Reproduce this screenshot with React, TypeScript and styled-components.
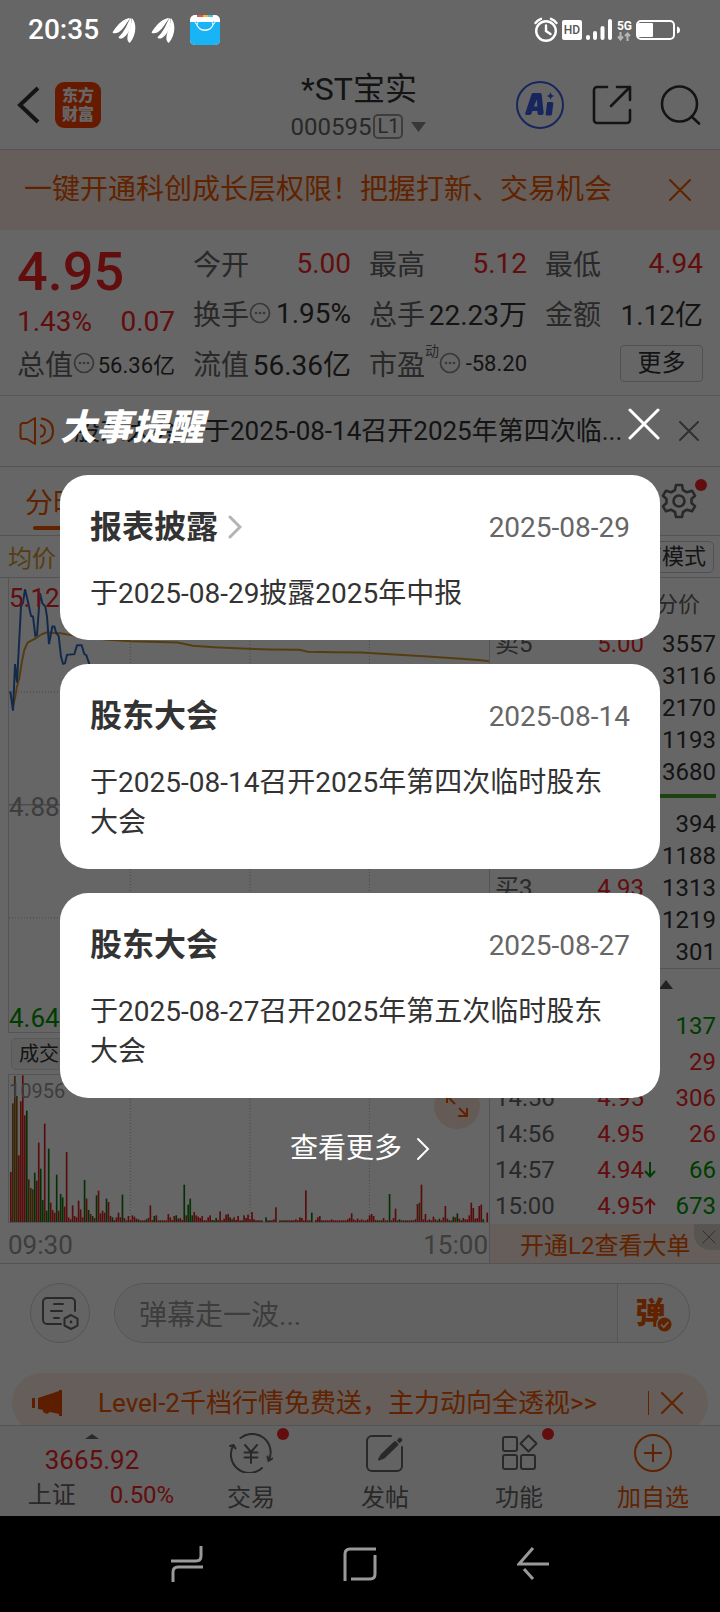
import React from 'react';
import styled, { createGlobalStyle, css } from 'styled-components';

const color = {
  ink: '#333333',
  body: '#666666',
  muted: '#999999',
  line: '#d2d2d6',
  red: '#f52525',
  green: '#009a00',
  orange: '#f25600',
  tint: '#fcece1',
  gold: '#d69a2c',
  blue: '#2f6dbd',
};

const Global = createGlobalStyle`
  * { box-sizing: border-box; }
  body {
    margin: 0;
    background: #000;
    font-family: Roboto, "Noto Sans CJK SC", sans-serif;
    color: ${color.ink};
  }
  button, input {
    font-family: inherit;
    color: inherit;
    background: none;
    border: 0;
    padding: 0;
    margin: 0;
  }
  button { cursor: pointer; }
  a { color: inherit; text-decoration: none; }
  svg { display: block; flex: none; }
`;

/* ---------- shell ---------- */
const Screen = styled.div`
  position: relative;
  background: #fff;
`;

const StatusBar = styled.header`
  position: relative;
  z-index: 2;
  height: 60px;
  padding: 0 40px 0 28px;
  display: flex;
  align-items: center;
  color: #fff;
`;
const Clock = styled.span`
  font-size: 28px;
  font-weight: 500;
  line-height: 62px;
  margin-right: 13px;
`;
const StatusApps = styled.div`
  display: flex;
  align-items: center;
  gap: 15px;
  flex: 1;
`;
const StatusIcons = styled.div`
  display: flex;
  align-items: center;
  gap: 4px;
`;
const HdBadge = styled.span`
  width: 20px;
  height: 20px;
  border-radius: 2px;
  background: #fff;
  color: #555;
  font-size: 12px;
  font-weight: 500;
  line-height: 20px;
  text-align: center;
`;
const Network = styled.span`
  display: flex;
  flex-direction: column;
  align-items: center;
  font-size: 12px;
  font-weight: 700;
  line-height: 12px;
`;

/* ---------- title bar ---------- */
const TitleBar = styled.div`
  height: 90px;
  padding: 0 18px 0 16px;
  display: grid;
  grid-template-columns: 1fr auto 1fr;
  align-items: center;
  border-bottom: 1px solid ${color.line};
`;
const BarSide = styled.div<{ $end?: boolean }>`
  display: flex;
  align-items: center;
  gap: ${p => (p.$end ? 28 : 14)}px;
  justify-content: ${p => (p.$end ? 'flex-end' : 'flex-start')};
`;
const IconButton = styled.button`
  display: flex;
  align-items: center;
  justify-content: center;
`;
const BrandLogo = styled.a`
  width: 46px;
  height: 46px;
  border-radius: 9px;
  background: #ff4400;
  color: #fff;
  font-size: 16px;
  font-weight: 900;
  line-height: 19px;
  padding: 4px 0;
  text-align: center;
`;
const StockName = styled.h1`
  margin: 0;
  font-size: 32px;
  font-weight: 400;
  line-height: 44px;
  text-align: center;
`;
const StockCode = styled.div`
  display: flex;
  align-items: center;
  gap: 2px;
  font-size: 24px;
  line-height: 32px;
  color: ${color.body};
`;
const LevelTag = styled.span`
  border: 2px solid ${color.muted};
  border-radius: 5px;
  height: 25px;
  padding: 0 2px;
  font-size: 20px;
  line-height: 21px;
  color: ${color.body};
`;

/* ---------- promo, quotes, notice ---------- */
const Promo = styled.div`
  height: 80px;
  padding: 0 28px 0 24px;
  display: flex;
  align-items: center;
  justify-content: space-between;
  background: ${color.tint};
  color: ${color.orange};
  font-size: 28px;
  line-height: 40px;
`;
const Quotes = styled.section`
  padding: 8px 17px 7px;
  display: grid;
  grid-template-columns: repeat(4, minmax(0, 1fr));
  column-gap: 18px;
  border-bottom: 1px solid #dedede;
`;
const QuoteColumn = styled.div`
  display: flex;
  flex-direction: column;
`;
const LastPrice = styled.strong`
  height: 66px;
  font-size: 54px;
  font-weight: 500;
  line-height: 68px;
  color: ${color.red};
`;
const QuoteRow = styled.div<{ $short?: boolean }>`
  height: ${p => (p.$short ? 34 : 50)}px;
  display: flex;
  align-items: center;
  white-space: nowrap;
`;
const QuoteLabel = styled.span`
  font-size: 28px;
  color: ${color.body};
`;
const QuoteValue = styled.span<{ $up?: boolean; $small?: boolean }>`
  font-size: ${p => (p.$small ? 22 : 28)}px;
  color: ${p => (p.$up ? color.red : color.ink)};
  &:last-child { margin-left: auto; }
`;
const Superscript = styled.sup`
  font-size: 14px;
  line-height: 14px;
  color: ${color.body};
  align-self: flex-start;
  margin-top: 6px;
`;
const MoreButton = styled.button`
  margin-left: auto;
  width: 83px;
  height: 37px;
  border: 1px solid #c9c9c9;
  border-radius: 4px;
  font-size: 24px;
  line-height: 32px;
`;
const Notice = styled.div`
  height: 71px;
  padding: 0 20px 0 19px;
  display: flex;
  align-items: center;
  border-bottom: 1px solid ${color.line};
`;
const NoticeText = styled.a`
  flex: 1;
  min-width: 0;
  margin-left: 19px;
  font-size: 26px;
  line-height: 36px;
  white-space: nowrap;
  overflow: hidden;
`;

/* ---------- chart tabs ---------- */
const Tabs = styled.nav`
  height: 69px;
  padding: 0 23px 0 25px;
  display: flex;
  align-items: center;
  justify-content: space-between;
  border-bottom: 1px solid ${color.line};
  font-size: 28px;
  color: ${color.body};
`;
const Tab = styled.a<{ $active?: boolean }>`
  height: 68px;
  line-height: 74px;
  position: relative;
  ${p =>
    p.$active &&
    css`
      color: ${color.orange};
      &::after {
        content: '';
        position: absolute;
        left: 8px;
        right: 8px;
        bottom: 5px;
        height: 4px;
        border-radius: 2px;
        background: ${color.orange};
      }
    `}
`;
const Dotted = styled.span`
  position: relative;
  display: block;
`;
const Dot = styled.i<{ $far?: boolean }>`
  position: absolute;
  top: ${p => (p.$far ? -5 : -4)}px;
  right: ${p => (p.$far ? -16 : -10)}px;
  width: 12px;
  height: 12px;
  border-radius: 50%;
  background: ${color.red};
`;
const Legend = styled.div`
  height: 42px;
  padding: 0 6px 0 8px;
  display: flex;
  align-items: center;
  justify-content: space-between;
  border-bottom: 1px solid ${color.line};
  font-size: 24px;
  color: ${color.gold};
`;
const ModeButton = styled.button`
  height: 32px;
  padding: 0 7px;
  border: 1px solid #c4c8d4;
  border-radius: 5px;
  font-size: 22px;
  line-height: 30px;
  color: ${color.ink};
`;

/* ---------- charts ---------- */
const Market = styled.section`
  display: grid;
  grid-template-columns: minmax(0, 489fr) minmax(0, 231fr);
  border-bottom: 1px solid ${color.line};
`;
const Charts = styled.div`
  padding-left: 8px;
`;
const Plot = styled.div<{ $h: number }>`
  position: relative;
  height: ${p => p.$h}px;
  border-left: 1px solid ${color.line};
  border-bottom: 1px solid ${color.line};
  svg { width: 100%; height: 100%; }
`;
const AxisLabel = styled.span<{ $at: 'top' | 'middle' | 'bottom'; $c: string; $small?: boolean }>`
  position: absolute;
  left: 0;
  font-size: ${p => (p.$small ? 20 : 26)}px;
  line-height: 32px;
  color: ${p => p.$c};
  ${p => p.$at === 'top' && (p.$small ? 'top: 0;' : 'top: 4px;')}
  ${p => p.$at === 'middle' && 'top: 50%; margin-top: -14px;'}
  ${p => p.$at === 'bottom' && 'bottom: -2px;'}
`;
const IndicatorRow = styled.div`
  height: 42px;
  padding: 5px 3px;
  border-bottom: 1px solid ${color.line};
`;
const IndicatorButton = styled.button`
  height: 32px;
  padding: 0 7px;
  border: 1px solid #dcdcdc;
  border-radius: 5px;
  background: #f4f4f4;
  font-size: 20px;
  line-height: 28px;
`;
const ExpandButton = styled.button`
  position: absolute;
  right: 9px;
  top: 8px;
  width: 46px;
  height: 46px;
  border-radius: 50%;
  background: #fbe3d7;
  svg { width: 24px; height: 24px; margin: 0 auto; }
`;
const TimeAxis = styled.div`
  height: 40px;
  padding-right: 1px;
  display: flex;
  justify-content: space-between;
  font-size: 26px;
  line-height: 44px;
  color: ${color.muted};
`;

/* ---------- order book ---------- */
const Book = styled.div`
  border-left: 1px solid ${color.line};
`;
const BookTabs = styled.div`
  height: 50px;
  padding-right: 20px;
  text-align: right;
  font-size: 22px;
  line-height: 54px;
  color: ${color.body};
`;
const Grid = styled.table`
  width: 100%;
  table-layout: fixed;
  border-collapse: collapse;
  font-size: 24px;
  line-height: 28px;
`;
const Row = styled.tr<{ $h: number }>`
  height: ${p => p.$h}px;
`;
const Cell = styled.td<{ $w?: number; $c?: string; $first?: boolean; $last?: boolean }>`
  width: ${p => (p.$w ? `${p.$w}px` : 'auto')};
  padding: 0 ${p => (p.$last ? 4 : 0)}px 0 ${p => (p.$first ? 5 : 0)}px;
  text-align: ${p => (p.$first ? 'left' : 'right')};
  color: ${p => p.$c || color.ink};
`;
const Balance = styled.div`
  height: 4px;
  margin: 6px 4px 10px 6px;
  background: linear-gradient(90deg, ${color.red} 30%, #49a62f 30%);
`;
const Collapse = styled.button`
  width: 100%;
  height: 40px;
  padding: 0 47px 8px 0;
  border-top: 1px solid ${color.line};
  display: flex;
  align-items: center;
  justify-content: flex-end;
`;
const L2Promo = styled.div`
  position: relative;
  height: 39px;
  padding-left: 30px;
  background: ${color.tint};
  color: ${color.orange};
  font-size: 24px;
  line-height: 44px;
`;
const L2Close = styled.button`
  position: absolute;
  top: 0;
  right: 0;
  width: 26px;
  height: 26px;
  padding-left: 7px;
  border-bottom-left-radius: 16px;
  background: #d9d2cc;
`;

/* ---------- comment bar and strip ---------- */
const CommentBar = styled.form`
  padding: 19px 30px 30px;
  display: flex;
  gap: 24px;
`;
const RoundButton = styled.button`
  width: 60px;
  height: 60px;
  border: 1px solid ${color.line};
  border-radius: 50%;
  background: #fafafa;
  display: flex;
  align-items: center;
  justify-content: center;
`;
const CommentBox = styled.div`
  flex: 1;
  height: 60px;
  display: flex;
  border: 1px solid ${color.line};
  border-radius: 30px;
  overflow: hidden;
  background: #fafafa;
`;
const CommentInput = styled.input`
  flex: 1;
  min-width: 0;
  padding: 4px 24px 0;
  font-size: 28px;
  background: #f5f5f5;
  outline: none;
  &::placeholder { color: ${color.muted}; opacity: 1; }
`;
const BarrageButton = styled.button`
  position: relative;
  width: 72px;
  padding-right: 6px;
  border-left: 1px solid ${color.line};
  font-size: 30px;
  font-weight: 900;
  line-height: 54px;
  color: ${color.orange};
  svg { position: absolute; left: 38px; top: 32px; }
`;
const StripClip = styled.div`
  height: 52px;
  padding: 0 12px;
  overflow: hidden;
`;
const Strip = styled.div`
  height: 60px;
  padding: 0 24px 0 20px;
  border-radius: 30px;
  background: ${color.tint};
  color: ${color.orange};
  display: flex;
  align-items: center;
  font-size: 26px;
  line-height: 36px;
`;
const StripText = styled.a`
  flex: 1;
  margin-left: 36px;
`;
const StripRule = styled.span`
  width: 1px;
  height: 24px;
  margin-right: 11px;
  background: ${color.orange};
`;

/* ---------- bottom bars ---------- */
const TabBar = styled.nav`
  height: 91px;
  display: grid;
  grid-template-columns: 184fr 134fr 134fr 134fr 134fr;
  border-top: 1px solid ${color.line};
  background: #f8f8f8;
`;
const IndexCell = styled.a`
  display: flex;
  flex-direction: column;
  align-items: center;
  padding-top: 8px;
  color: ${color.red};
  font-size: 26px;
  line-height: 42px;
`;
const IndexRow = styled.span`
  display: flex;
  gap: 34px;
  padding-left: 18px;
  font-size: 24px;
  line-height: 28px;
`;
const IndexName = styled.span`
  color: ${color.body};
`;
const TabItem = styled.a<{ $accent?: boolean }>`
  display: flex;
  flex-direction: column;
  align-items: center;
  padding-top: 7px;
  font-size: 24px;
  line-height: 50px;
  color: ${p => (p.$accent ? color.orange : color.body)};
`;
const SystemNav = styled.nav`
  height: 96px;
  background: #000;
  display: flex;
  align-items: center;
  justify-content: center;
  gap: 140px;
`;

/* ---------- reminder dialog ---------- */
const Backdrop = styled.div`
  position: absolute;
  inset: 0;
  z-index: 1;
  background: rgba(0, 0, 0, 0.6);
  padding: 397px 60px 0;
`;
const Dialog = styled.section`
  display: flex;
  flex-direction: column;
  gap: 24px;
`;
const DialogHead = styled.header`
  height: 54px;
  display: flex;
  align-items: center;
  justify-content: space-between;
  color: #fff;
`;
const DialogTitle = styled.h2`
  margin: 0;
  font-family: "Noto Sans CJK SC", sans-serif;
  font-size: 36px;
  font-weight: 900;
  font-style: italic;
  line-height: 52px;
`;
const Card = styled.article`
  padding: 30px 30px 26px;
  border-radius: 28px;
  background: #fff;
`;
const CardHead = styled.header`
  height: 44px;
  display: flex;
  align-items: center;
  gap: 10px;
`;
const CardTitle = styled.h3`
  margin: 0;
  font-size: 32px;
  font-weight: 700;
  line-height: 46px;
`;
const CardDate = styled.time`
  margin-left: auto;
  font-size: 28px;
  color: ${color.body};
`;
const CardText = styled.p`
  margin: 25px 0 0;
  padding-right: 8px;
  font-size: 28px;
  line-height: 40px;
`;
const SeeMore = styled.button`
  align-self: center;
  display: flex;
  align-items: center;
  gap: 14px;
  padding-top: 6px;
  font-size: 28px;
  line-height: 42px;
  color: #fff;
`;

/* ---------- icons ---------- */
const Cross = ({ size, w = 2, c = 'currentColor' }: { size: number; w?: number; c?: string }) => (
  <svg width={size} height={size} viewBox={`0 0 ${size} ${size}`} stroke={c} strokeWidth={w} strokeLinecap="round">
    <path d={`M2 2L${size - 2} ${size - 2}M${size - 2} 2L2 ${size - 2}`} />
  </svg>
);
const Chevron = ({ c, w = 2 }: { c: string; w?: number }) => (
  <svg width="14" height="24" viewBox="0 0 14 24" fill="none" stroke={c} strokeWidth={w} strokeLinecap="round">
    <path d="M2 2l10 10L2 22" />
  </svg>
);
const Wing = () => (
  <svg width="24" height="27" viewBox="338 50 70 80" fill="#fff">
    <path d="M339 95C350 80 364 58 388 53L391 55C382 62 374 86 356 96C350 99 341 100 339 95Z" />
    <path d="M357 109C374 96 382 72 392 54L396 55C394 76 390 100 370 112C364 115 357 114 357 109Z" />
    <path d="M390 127C372 116 394 84 397 54C413 72 408 106 390 127Z" />
  </svg>
);
const Bag = () => (
  <svg width="30" height="30" viewBox="0 0 30 30">
    <rect width="30" height="30" rx="5" fill="#fff" />
    <path d="M0 7h30v18a5 5 0 0 1-5 5H5a5 5 0 0 1-5-5z" fill="#18b4f6" />
    <path d="M7 0h6v2H7z" fill="#e0524c" />
    <path d="M13 0h5v2h-5z" fill="#f2b63c" />
    <path d="M18 0h5v2h-5z" fill="#4fc3d6" />
    <path d="M6.500 8C8 17.500 22 17.500 23.500 8" fill="none" stroke="#fff" strokeWidth="1.500" />
    <circle cx="6.500" cy="7.500" r="1.300" fill="#18b4f6" stroke="#fff" />
    <circle cx="23.500" cy="7.500" r="1.300" fill="#18b4f6" stroke="#fff" />
  </svg>
);
const Alarm = () => (
  <svg width="24" height="26" viewBox="0 0 24 26" fill="none" stroke="#fff" strokeWidth="2.400" strokeLinecap="round">
    <circle cx="12" cy="14" r="9.800" />
    <path d="M12 8.500V14l4.500 3M1.500 6A12 12 0 0 1 7 1.800M17 1.800A12 12 0 0 1 22.500 6" />
  </svg>
);
const Signal = () => (
  <svg width="27" height="22" viewBox="0 0 27 22" fill="#fff">
    <rect x="0" y="16" width="4" height="5" rx="2" />
    <rect x="7" y="12" width="4" height="9" rx="2" />
    <rect x="14.500" y="7" width="4" height="14" rx="2" />
    <rect x="22" y="0" width="4" height="21" rx="2" />
  </svg>
);
const DataArrows = () => (
  <svg width="14" height="9" viewBox="0 0 14 9" fill="none" stroke="#b5b5b5" strokeWidth="2">
    <path d="M3.500 0v7M1 4.500L3.500 7.500 6 4.500M10.500 9V1.500M8 4l2.500-2.500L13 4" />
  </svg>
);
const Battery = () => (
  <svg width="44" height="20" viewBox="0 0 44 20">
    <rect x="1" y="1" width="37" height="18" rx="4" fill="none" stroke="#fff" strokeWidth="2" />
    <rect x="2" y="3" width="15" height="14" rx="1" fill="#fff" />
    <path d="M41 6.500q3 .500 3 3.500t-3 3.500z" fill="#fff" />
  </svg>
);
const Back = () => (
  <svg width="25" height="38" viewBox="0 0 25 38" fill="none" stroke="#333" strokeWidth="4">
    <path d="M22 2L4 19l18 17" />
  </svg>
);
const AiMark = () => (
  <svg width="48" height="48" viewBox="0 0 48 48">
    <circle cx="24" cy="24" r="23" fill="none" stroke="#3a62ec" strokeWidth="2" />
    <path fill="#3a62ec" fillRule="evenodd" d="M17 12h7q1.500 0 1.700 1.500l2 18.500q0 2-2 2h-2.500q-1.700 0-1.700-2v-2h-5l-1 2.500q-.700 1.500-2 1.500h-3q-2-.200-1.200-2l6-18Q15.500 12 17 12zM17.800 25.500h3.500L21 18.500z" />
    <path fill="#3a62ec" d="M32 21h4q1.500 0 1.300 1.500l-1.300 10.500q-.300 1.500-1.500 1.500H31q-1.500 0-1.300-1.500L31 22q.100-1 1-1zM34.500 11q.600 3.400 4 4-3.400.600-4 4-.600-3.400-4-4 3.400-.600 4-4z" />
  </svg>
);
const Share = () => (
  <svg width="40" height="40" viewBox="0 0 40 40" fill="none" stroke="#333" strokeWidth="2.600" strokeLinecap="round" strokeLinejoin="round">
    <path d="M15 2H5a3 3 0 0 0-3 3v30a3 3 0 0 0 3 3h30a3 3 0 0 0 3-3V25" />
    <path d="M25 2h13v13M38 2L19 21" />
  </svg>
);
const Search = () => (
  <svg width="42" height="42" viewBox="0 0 42 42" fill="none" stroke="#333" strokeWidth="2.600" strokeLinecap="round">
    <circle cx="19.500" cy="20" r="17.500" />
    <path d="M31.500 32.500l7.500 7" />
  </svg>
);
const Info = () => (
  <svg width="22" height="22" viewBox="0 0 22 22" fill="none" stroke="#8c8c8c" strokeWidth="1.700">
    <circle cx="11" cy="11" r="9.500" />
    <path d="M7 11h.100M11 11h.100M15 11h.100" strokeWidth="2.600" strokeLinecap="round" />
  </svg>
);
const Speaker = () => (
  <svg width="36" height="30" viewBox="0 0 36 30" fill="none" stroke={color.orange} strokeWidth="2">
    <path d="M16 2v26l-8-5H4a2.500 2.500 0 0 1-2.500-2.500v-11A2.500 2.500 0 0 1 4 7h4z" strokeLinejoin="round" />
    <path d="M21 9q5 1.500 5 6t-5 6M22 2.500q12 1.500 12 12.500t-12 12.500" />
  </svg>
);
const Gear = () => (
  <svg width="36" height="36" viewBox="0 0 36 36" fill="none" stroke="#666" strokeWidth="2.600" strokeLinejoin="round">
    <path d="M15 2h6l1 5 4 2.300 5-1.600 3 5L30.500 16v4l3.500 3.300-3 5-5-1.600-4 2.300-1 5h-6l-1-5-4-2.300-5 1.600-3-5L5.500 20v-4L2 12.700l3-5 5 1.600L14 7z" />
    <circle cx="18" cy="18" r="5.500" />
  </svg>
);
const Arrow = ({ up }: { up?: boolean }) => (
  <svg width="12" height="16" viewBox="0 0 12 16" fill="none" stroke={up ? color.red : color.green} strokeWidth="2">
    <path d={up ? 'M6 16V2M1 7l5-5.500L11 7' : 'M6 0v14M1 9l5 5.500L11 9'} />
  </svg>
);
const PanelIcon = () => (
  <svg width="38" height="34" viewBox="0 0 38 34" fill="none" stroke="#666" strokeWidth="2" strokeLinecap="round">
    <path d="M20 28H6a4 4 0 0 1-4-4V6a4 4 0 0 1 4-4h24a4 4 0 0 1 4 4v9" />
    <path d="M13 8h9M10 15h11M13 22h5" />
    <path d="M30 19l6.500 3.600v7L30 33l-6.500-3.500v-7z" strokeLinejoin="round" />
    <circle cx="30" cy="26" r="1.400" fill="#666" stroke="none" />
  </svg>
);
const CheckBadge = () => (
  <svg width="17" height="17" viewBox="0 0 17 17">
    <circle cx="8.500" cy="8.500" r="8.500" fill="#fafafa" />
    <circle cx="8.500" cy="8.500" r="7" fill={color.orange} />
    <path d="M5 8.500l2.800 2.800L12.300 6" fill="none" stroke="#fafafa" strokeWidth="1.600" />
  </svg>
);
const Horn = () => (
  <svg width="30" height="28" viewBox="0 0 30 28" fill="#e84c00">
    <path d="M0 9h3v10H0zM6 9l21-7V1h3v26h-3v-2l-9-2-3 2-4-2v-2l-5-1z" />
  </svg>
);
const Trade = () => (
  <svg width="44" height="40" viewBox="0 0 44 40" fill="none" stroke="#666" strokeWidth="2" strokeLinecap="round">
    <path d="M11.500 5A18.500 18.500 0 0 1 39.500 28M39.500 28l4-2.500M39.500 28l-1-4.500" />
    <path d="M33 35A18.500 18.500 0 0 1 4.500 12M4.500 12l-3.500 1M4.500 12l2 3.500" />
    <path d="M16 12l6 7 6-7M22 19v11M15.500 19.500h13M15.500 24.500h13" />
  </svg>
);
const Post = () => (
  <svg width="40" height="40" viewBox="0 0 40 40" fill="none" stroke="#666" strokeWidth="2" strokeLinecap="round">
    <path d="M26 3H7a5 5 0 0 0-5 5v25a5 5 0 0 0 5 5h25a5 5 0 0 0 5-5V14" />
    <path d="M14 26.500l2.500-4.500L30 9l2.500 2.500L19 24.500zM33 7.500l2-2 1.500 1.500-2 2z" fill="#666" strokeLinejoin="round" />
  </svg>
);
const Functions = () => (
  <svg width="38" height="40" viewBox="0 0 38 40" fill="none" stroke="#666" strokeWidth="2" strokeLinejoin="round">
    <rect x="3" y="4" width="14" height="14" rx="2" />
    <rect x="3" y="22" width="14" height="14" rx="2" />
    <rect x="21" y="22" width="14" height="14" rx="2" />
    <path d="M28.500 2.500l8 8-8 8-8-8z" />
  </svg>
);
const Add = () => (
  <svg width="40" height="40" viewBox="0 0 40 40" fill="none" stroke={color.orange} strokeWidth="2">
    <circle cx="20" cy="20" r="18" />
    <path d="M20 11v18M11 20h18" />
  </svg>
);

/* ---------- data ---------- */
const asks = [['卖5', '5.00', '3557'], ['', '', '3116'], ['', '', '2170'], ['', '', '1193'], ['', '', '3680']];
const bids = [['', '', '394'], ['', '', '1188'], ['买3', '4.93', '1313'], ['', '', '1219'], ['', '', '301']];
const trades: [string, string, string, string, string][] = [
  ['', '', '', '137', 'g'],
  ['', '', '', '29', 'r'],
  ['14:56', '4.95', '', '306', 'r'],
  ['14:56', '4.95', '', '26', 'r'],
  ['14:57', '4.94', 'down', '66', 'g'],
  ['15:00', '4.95', 'up', '673', 'g'],
];
const events = [
  { title: '报表披露', date: '2025-08-29', text: '于2025-08-29披露2025年中报', link: true },
  { title: '股东大会', date: '2025-08-14', text: '于2025-08-14召开2025年第四次临时股东大会' },
  { title: '股东大会', date: '2025-08-27', text: '于2025-08-27召开2025年第五次临时股东大会' },
];

/* One entry per minute: height plus r (rise), g (fall) or m (mixed). */
const volume = (
  '150r 356m 438m 378m 200r 362r 440r 320r 334g 128m 102m 98m 148g 124r 238r 160g 66g 295r 34g 220g 58r 36r 28r 142g 34r 84g 74g 46r 210r 14r ' +
  '8r 50r 18r 14r 64r 38r 14r 126g 70r 36g 24r 18g 12r 80g 94r 26r 34r 28r 70g 60r 18r 14g 6r 14r 28r 14r 82g 12r 5r 18r ' +
  '6r 20r 16r 10r 8g 5r 5r 5r 8g 12r 50r 6r 18g 20r 5r 5g 5r 5r 5r 24r 14r 6r 18r 20g 10r 12r 6r 112g 20r 52g ' +
  '70g 20g 30r 20r 16r 12r 18r 5r 5r 14r 20r 6r 5g 12g 6r 32r 5r 10r 22r 24r 14g 8r 14r 6r 18r 5r 5g 20r 12r 22r ' +
  '8r 30r 8r 5r 5r 5r 5r 0r 14g 5r 5g 5r 8r 44r 0r 5g 5r 5r 5g 5r 5r 5g 5r 8r 5r 14r 12r 5r 95r 5r ' +
  '5r 28g 0r 6r 14r 18r 5g 5r 5r 5r 5r 8r 5r 5r 5r 5r 5r 5r 5r 8r 12r 26r 8r 5r 10r 5r 8r 5r 5r 8r ' +
  '20r 24r 18r 6r 5g 5r 5g 12r 5r 5r 84g 5r 12r 40r 5r 8g 5r 5g 5r 5r 5r 5g 5r 8r 54r 58m 112r 8r 24r 5r ' +
  '8r 5r 16r 8r 5r 10g 5r 14r 48r 10r 5g 5r 16g 14r 26g 10r 5g 12r 8r 8r 20r 58r 42r 10r 12r 48r 52r 8g 0r 28r'
)
  .split(' ')
  .map(v => ({ h: parseInt(v, 10), kind: v.slice(-1) }));
const barFill: Record<string, string> = { r: '#dc2020', g: '#0c7a0c', m: '#8a5a10' };

const GridLines = ({ y, h }: { y: number; h: number }) => (
  <>
    {[388, 747, 1105].map(x => (
      <path key={x} d={`M${x} ${y}v${h}`} stroke="#b4b4b4" strokeDasharray="1 2" vectorEffect="non-scaling-stroke" />
    ))}
  </>
);

const BookRows = ({ rows }: { rows: string[][] }) => (
  <Grid>
    <tbody>
      {rows.map(([label, price, qty]) => (
        <Row key={qty} $h={32}>
          <Cell $first $w={76} $c={color.body}>{label}</Cell>
          <Cell $c={color.red}>{price}</Cell>
          <Cell $last $w={76}>{qty}</Cell>
        </Row>
      ))}
    </tbody>
  </Grid>
);

export default function App() {
  return (
    <>
      <Global />
      <Screen>
        <StatusBar>
          <Clock>20:35</Clock>
          <StatusApps>
            <Wing />
            <Wing />
            <Bag />
          </StatusApps>
          <StatusIcons>
            <Alarm />
            <HdBadge>HD</HdBadge>
            <Signal />
            <Network>
              5G
              <DataArrows />
            </Network>
            <Battery />
          </StatusIcons>
        </StatusBar>

        <TitleBar>
          <BarSide>
            <IconButton aria-label="返回"><Back /></IconButton>
            <BrandLogo href="#home">东方<br />财富</BrandLogo>
          </BarSide>
          <div>
            <StockName>*ST宝实</StockName>
            <StockCode>
              000595
              <LevelTag>L1</LevelTag>
              <svg width="22" height="10" viewBox="0 0 22 10" fill="#8c8c8c"><path d="M6 0h15l-7.500 10z" /></svg>
            </StockCode>
          </div>
          <BarSide $end>
            <IconButton aria-label="AI"><AiMark /></IconButton>
            <IconButton aria-label="分享"><Share /></IconButton>
            <IconButton aria-label="搜索"><Search /></IconButton>
          </BarSide>
        </TitleBar>

        <Promo>
          <a href="#promo">一键开通科创成长层权限！把握打新、交易机会</a>
          <IconButton aria-label="关闭"><Cross size={24} /></IconButton>
        </Promo>

        <Quotes>
          <QuoteColumn>
            <LastPrice>4.95</LastPrice>
            <QuoteRow $short>
              <QuoteValue $up>1.43%</QuoteValue>
              <QuoteValue $up>0.07</QuoteValue>
            </QuoteRow>
            <QuoteRow>
              <QuoteLabel>总值</QuoteLabel><Info />
              <QuoteValue $small>56.36亿</QuoteValue>
            </QuoteRow>
          </QuoteColumn>
          <QuoteColumn>
            <QuoteRow><QuoteLabel>今开</QuoteLabel><QuoteValue $up>5.00</QuoteValue></QuoteRow>
            <QuoteRow><QuoteLabel>换手</QuoteLabel><Info /><QuoteValue>1.95%</QuoteValue></QuoteRow>
            <QuoteRow><QuoteLabel>流值</QuoteLabel><QuoteValue>56.36亿</QuoteValue></QuoteRow>
          </QuoteColumn>
          <QuoteColumn>
            <QuoteRow><QuoteLabel>最高</QuoteLabel><QuoteValue $up>5.12</QuoteValue></QuoteRow>
            <QuoteRow><QuoteLabel>总手</QuoteLabel><QuoteValue>22.23万</QuoteValue></QuoteRow>
            <QuoteRow>
              <QuoteLabel>市盈</QuoteLabel><Superscript>动</Superscript><Info />
              <QuoteValue $small>-58.20</QuoteValue>
            </QuoteRow>
          </QuoteColumn>
          <QuoteColumn>
            <QuoteRow><QuoteLabel>最低</QuoteLabel><QuoteValue $up>4.94</QuoteValue></QuoteRow>
            <QuoteRow><QuoteLabel>金额</QuoteLabel><QuoteValue>1.12亿</QuoteValue></QuoteRow>
            <QuoteRow><MoreButton>更多</MoreButton></QuoteRow>
          </QuoteColumn>
        </Quotes>

        <Notice>
          <Speaker />
          <NoticeText href="#notice">股东大会：于2025-08-14召开2025年第四次临...</NoticeText>
          <IconButton aria-label="关闭提醒"><Cross size={22} c="#777" /></IconButton>
        </Notice>

        <Tabs>
          <Tab href="#min" $active>分时</Tab>
          <IconButton aria-label="设置"><Dotted><Gear /><Dot /></Dotted></IconButton>
        </Tabs>

        <Legend>
          <span>均价</span>
          <ModeButton>极简模式</ModeButton>
        </Legend>

        <Market>
          <Charts>
            <Plot $h={455}>
              <svg viewBox="24 354 1440 1365" preserveAspectRatio="none" fill="none">
                <GridLines y={354} h={1365} />
                <path d="M24 697H1464M24 1376H1464" stroke="#b4b4b4" strokeDasharray="1 2" vectorEffect="non-scaling-stroke" />
                <path d="M24 1036H1464" stroke="#a0a0a0" vectorEffect="non-scaling-stroke" />
                <path
                  d="M36 740L42 715 48 680 55 655 62 610 70 570 80 548 105 535 120 524 135 518 165 519 180 520 205 525 260 532 320 540 390 544 530 548 575 558 640 562 740 567 810 569 895 570 920 576 1000 577 1080 578 1180 584 1280 590 1380 597 1440 601 1464 604"
                  stroke={color.gold} strokeWidth="2" vectorEffect="non-scaling-stroke"
                />
                <path
                  d="M28 695L36 753 42 613 48 668 60 440 66 428 72 388 82 430 90 468 96 470 103 528 108 525 117 400 124 430 133 440 138 470 144 553 154 500 160 500 166 520 173 528 180 590 186 612 192 610 198 585 220 583 228 556 242 556 250 583 256 586 264 610 290 690 340 650 400 720"
                  stroke={color.blue} strokeWidth="2" vectorEffect="non-scaling-stroke"
                />
              </svg>
              <AxisLabel $at="top" $c={color.red}>5.12</AxisLabel>
              <AxisLabel $at="middle" $c={color.muted}>4.88</AxisLabel>
              <AxisLabel $at="bottom" $c={color.green}>4.64</AxisLabel>
            </Plot>
            <IndicatorRow><IndicatorButton>成交量</IndicatorButton></IndicatorRow>
            <Plot $h={148}>
              <svg viewBox="24 288 1440 441" preserveAspectRatio="none" fill="none">
                <GridLines y={288} h={441} />
                {volume.map((v, i) => (
                  <rect key={i} x={27 + i * 5.98} y={729 - v.h} width="5" height={v.h} fill={barFill[v.kind]} />
                ))}
              </svg>
              <AxisLabel $at="top" $small $c={color.muted}>10956</AxisLabel>
              <ExpandButton aria-label="全屏">
                <svg viewBox="0 0 24 24" fill="none" stroke={color.orange} strokeWidth="2">
                  <path d="M2 9V2h7M2 2l8 8M22 14v8h-9M22 22l-8-8" />
                </svg>
              </ExpandButton>
            </Plot>
            <TimeAxis><span>09:30</span><span>15:00</span></TimeAxis>
          </Charts>

          <Book>
            <BookTabs>分价</BookTabs>
            <BookRows rows={asks} />
            <Balance />
            <BookRows rows={bids} />
            <Collapse aria-label="收起">
              <svg width="14" height="9" viewBox="0 0 14 9" fill="#555"><path d="M0 9h14L7 0z" /></svg>
            </Collapse>
            <Grid>
              <tbody>
                {trades.map(([time, price, dir, qty, kind]) => (
                  <Row key={qty} $h={36}>
                    <Cell $first $w={76} $c={color.body}>{time}</Cell>
                    <Cell $c={color.red}>{price}</Cell>
                    <Cell $w={14}>{dir && <Arrow up={dir === 'up'} />}</Cell>
                    <Cell $last $w={62} $c={kind === 'g' ? color.green : color.red}>{qty}</Cell>
                  </Row>
                ))}
              </tbody>
            </Grid>
            <L2Promo>
              <a href="#l2">开通L2查看大单</a>
              <L2Close aria-label="关闭推广"><Cross size={16} w={1} c="#777" /></L2Close>
            </L2Promo>
          </Book>
        </Market>

        <CommentBar onSubmit={e => e.preventDefault()}>
          <RoundButton type="button" aria-label="弹幕设置"><PanelIcon /></RoundButton>
          <CommentBox>
            <CommentInput aria-label="弹幕" placeholder="弹幕走一波..." />
            <BarrageButton type="button">弹<CheckBadge /></BarrageButton>
          </CommentBox>
        </CommentBar>

        <StripClip>
          <Strip>
            <Horn />
            <StripText href="#level2">Level-2千档行情免费送，主力动向全透视&gt;&gt;</StripText>
            <StripRule />
            <IconButton aria-label="关闭横幅"><Cross size={24} /></IconButton>
          </Strip>
        </StripClip>

        <TabBar>
          <IndexCell href="#index">
            <svg width="14" height="5" viewBox="0 0 14 5" fill="#666"><path d="M0 5h14L7 0z" /></svg>
            3665.92
            <IndexRow><IndexName>上证</IndexName>0.50%</IndexRow>
          </IndexCell>
          <TabItem href="#trade"><Dotted><Trade /><Dot $far /></Dotted>交易</TabItem>
          <TabItem href="#post"><Post />发帖</TabItem>
          <TabItem href="#functions"><Dotted><Functions /><Dot $far /></Dotted>功能</TabItem>
          <TabItem href="#add" $accent><Add />加自选</TabItem>
        </TabBar>

        <Backdrop>
          <Dialog role="dialog" aria-label="大事提醒">
            <DialogHead>
              <DialogTitle>大事提醒</DialogTitle>
              <IconButton aria-label="关闭弹窗"><Cross size={32} w={3} /></IconButton>
            </DialogHead>
            {events.map(e => (
              <Card key={e.date}>
                <CardHead>
                  <CardTitle>{e.title}</CardTitle>
                  {e.link && <Chevron c="#b4b4b4" w={3} />}
                  <CardDate>{e.date}</CardDate>
                </CardHead>
                <CardText>{e.text}</CardText>
              </Card>
            ))}
            <SeeMore>查看更多<Chevron c="#fff" /></SeeMore>
          </Dialog>
        </Backdrop>
      </Screen>

      <SystemNav>
        <IconButton aria-label="最近任务">
          <svg width="32" height="36" viewBox="0 0 32 36" fill="none" stroke="#999" strokeWidth="3">
            <path d="M30 0v10q0 5-5 5H0M32 21H7q-5 0-5 5v10" />
          </svg>
        </IconButton>
        <IconButton aria-label="主屏幕">
          <svg width="34" height="34" viewBox="0 0 34 34" fill="none" stroke="#999" strokeWidth="3">
            <path d="M2 34V7q0-5 5-5h26M32 8v19q0 5-5 5H8" />
          </svg>
        </IconButton>
        <IconButton aria-label="返回键">
          <svg width="32" height="34" viewBox="0 0 32 34" fill="none" stroke="#999" strokeWidth="3">
            <path d="M16 1L2 17h30M7 22l9 10" />
          </svg>
        </IconButton>
      </SystemNav>
    </>
  );
}
